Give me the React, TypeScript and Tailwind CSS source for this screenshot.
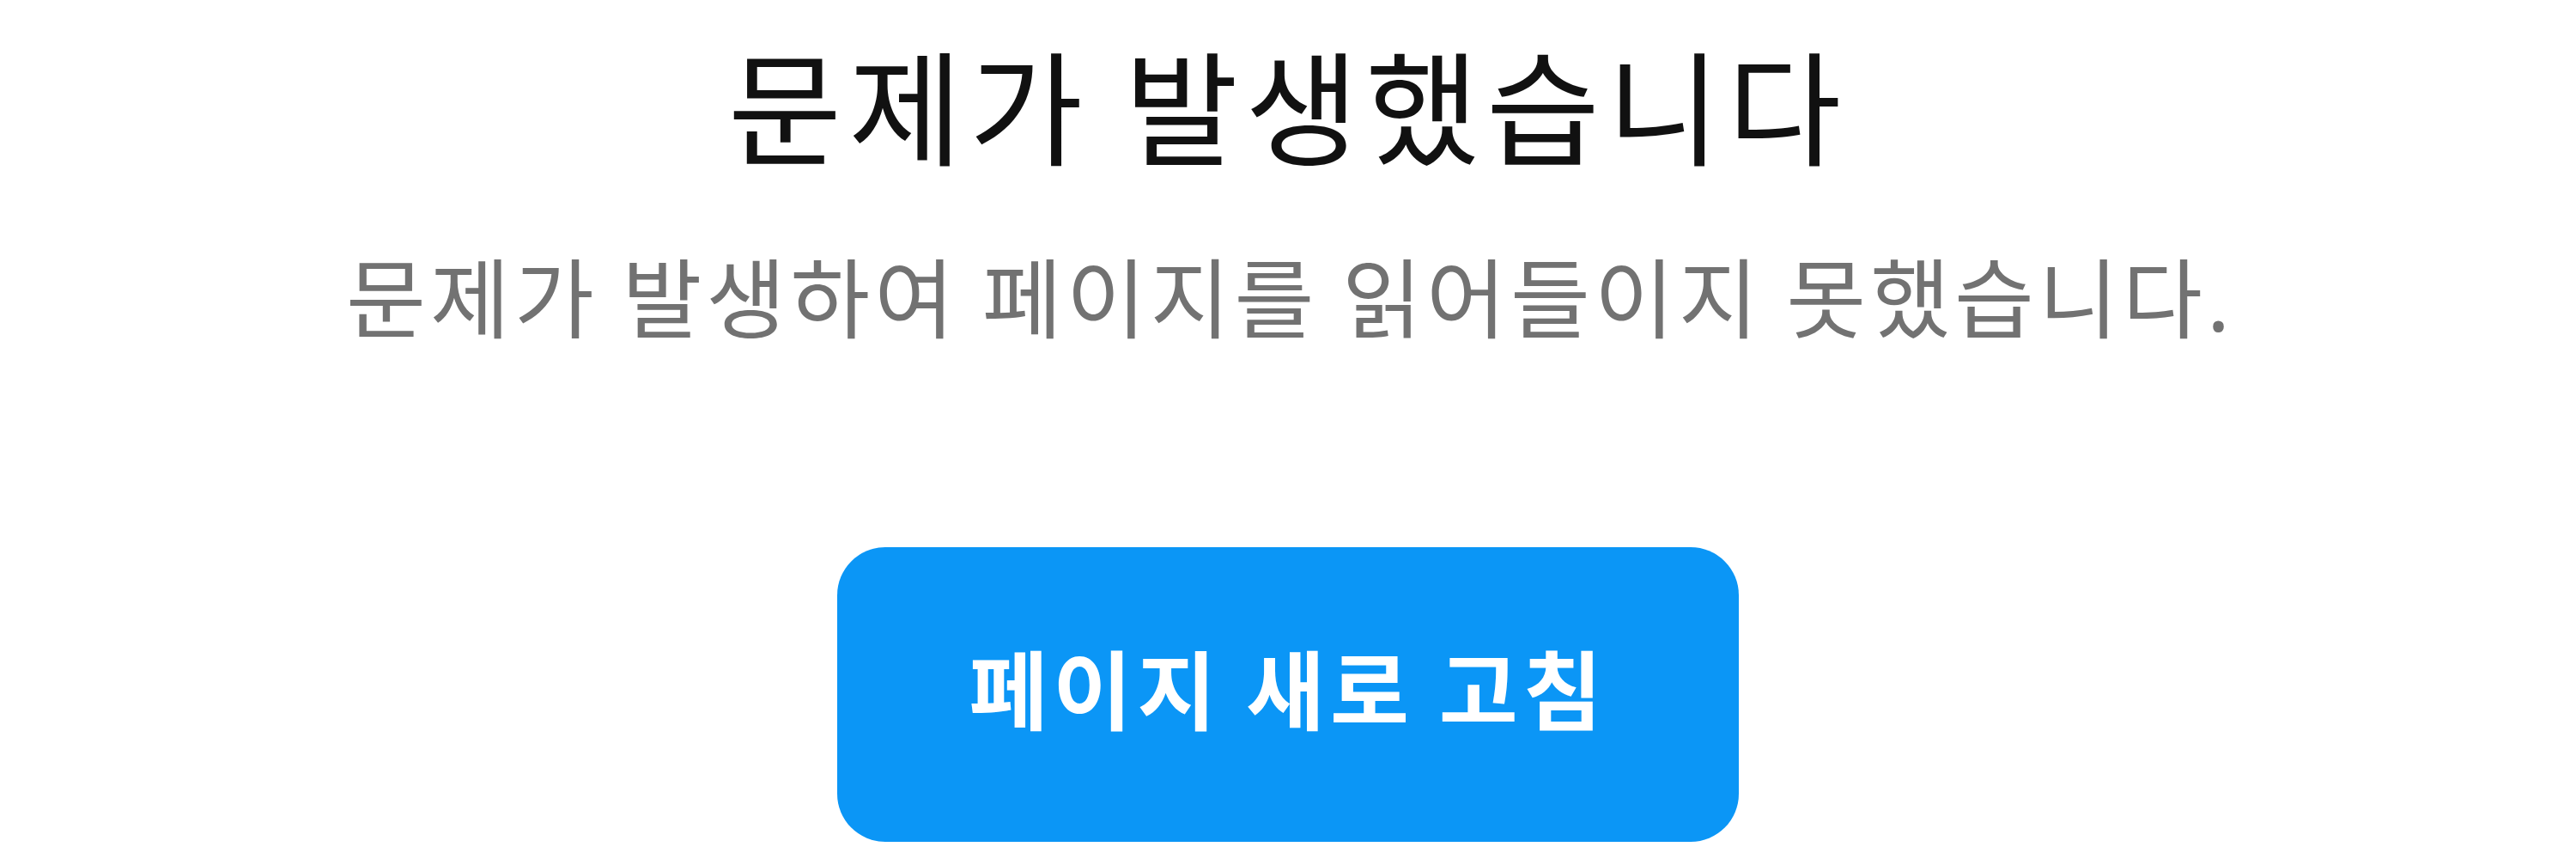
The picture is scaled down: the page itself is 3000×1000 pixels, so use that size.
export default function App() {
  return (
    <div
      className="flex min-h-[1000px] w-full flex-col items-center bg-white pt-[47px]"
      style={{ fontFamily: '"Noto Sans CJK KR", "Noto Sans", sans-serif' }}
    >
      <h1 className="text-[144px] font-normal leading-none tracking-[8px] text-[#111111]">
        문제가 발생했습니다
      </h1>
      <p className="mt-[101px] h-[101px] text-[101px] leading-none tracking-[5px] text-[#727272]">
        문제가 발생하여 페이지를 읽어들이지 못했습니다
        <span className="font-['Noto_Sans'] tracking-normal">.</span>
      </p>
      <button
        type="button"
        className="mt-[244px] flex h-[343px] w-[1050px] items-center justify-center rounded-[56px] bg-[#0b96f6] pb-[20px] text-[100px] font-bold leading-none tracking-[6px] text-white"
      >
        페이지 새로 고침
      </button>
    </div>
  );
}
